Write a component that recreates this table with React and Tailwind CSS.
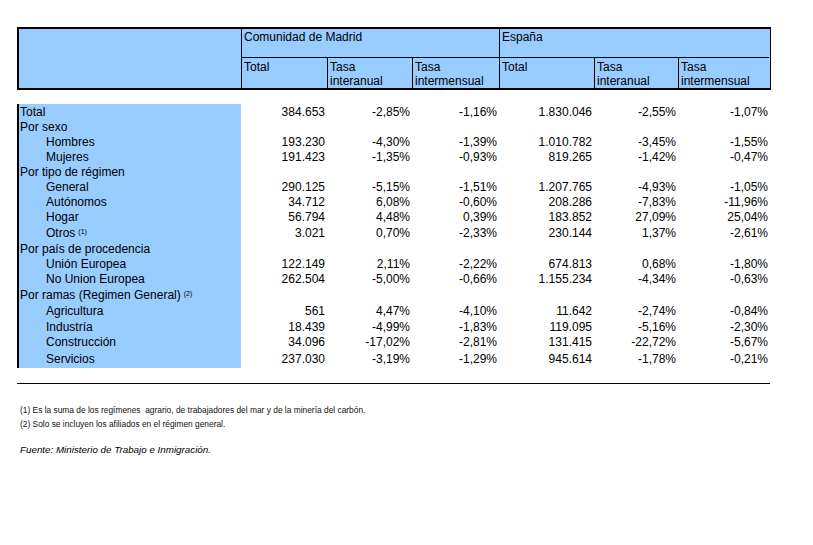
import React from 'react';

const rows = [
  { label: 'Total', v: ['384.653', '-2,85%', '-1,16%', '1.830.046', '-2,55%', '-1,07%'], h: 'h-[15px]' },
  { label: 'Por sexo', h: 'h-[15px]' },
  { label: 'Hombres', sub: true, v: ['193.230', '-4,30%', '-1,39%', '1.010.782', '-3,45%', '-1,55%'], h: 'h-[15px]' },
  { label: 'Mujeres', sub: true, v: ['191.423', '-1,35%', '-0,93%', '819.265', '-1,42%', '-0,47%'], h: 'h-[15px]' },
  { label: 'Por tipo de régimen', h: 'h-[15px]' },
  { label: 'General', sub: true, v: ['290.125', '-5,15%', '-1,51%', '1.207.765', '-4,93%', '-1,05%'], h: 'h-[15px]' },
  { label: 'Autónomos', sub: true, v: ['34.712', '6,08%', '-0,60%', '208.286', '-7,83%', '-11,96%'], h: 'h-[15px]' },
  { label: 'Hogar', sub: true, v: ['56.794', '4,48%', '0,39%', '183.852', '27,09%', '25,04%'], h: 'h-[15px]' },
  { label: 'Otros', note: '(1)', sub: true, v: ['3.021', '0,70%', '-2,33%', '230.144', '1,37%', '-2,61%'], h: 'h-[17px]' },
  { label: 'Por país de procedencia', h: 'h-[15px]' },
  { label: 'Unión Europea', sub: true, v: ['122.149', '2,11%', '-2,22%', '674.813', '0,68%', '-1,80%'], h: 'h-[15px]' },
  { label: 'No Union Europea', sub: true, v: ['262.504', '-5,00%', '-0,66%', '1.155.234', '-4,34%', '-0,63%'], h: 'h-[15px]' },
  { label: 'Por ramas (Regimen General)', note: '(2)', h: 'h-[17px]' },
  { label: 'Agricultura', sub: true, v: ['561', '4,47%', '-4,10%', '11.642', '-2,74%', '-0,84%'], h: 'h-[16px]' },
  { label: 'Industría', sub: true, v: ['18.439', '-4,99%', '-1,83%', '119.095', '-5,16%', '-2,30%'], h: 'h-[15px]' },
  { label: 'Construcción', sub: true, v: ['34.096', '-17,02%', '-2,81%', '131.415', '-22,72%', '-5,67%'], h: 'h-[15px]' },
  { label: 'Servicios', sub: true, v: ['237.030', '-3,19%', '-1,29%', '945.614', '-1,78%', '-0,21%'], h: 'h-[19px] pt-[1px]' },
];

const widths = ['w-[86px]', 'w-[85px]', 'w-[87px]', 'w-[95px]', 'w-[84px]', 'w-[92px]'];

function SubHead({ children, first }) {
  return (
    <div className={`h-[30px] pl-[2px] pt-[2px] leading-[14px] ${first ? '' : 'border-l border-black'}`}>
      {children}
    </div>
  );
}

function Group({ title, w }) {
  return (
    <div className="flex flex-col border-l border-black">
      <div className="h-[29px] border-b border-black pl-[2px] pt-[1px] leading-[14px]">{title}</div>
      <div className="flex">
        <div className={`${w[0]} shrink-0`}>
          <SubHead first>Total</SubHead>
        </div>
        <div className={`${w[1]} shrink-0`}>
          <SubHead>Tasa<br />interanual</SubHead>
        </div>
        <div className={`${w[2]} shrink-0`}>
          <SubHead>Tasa<br />intermensual</SubHead>
        </div>
      </div>
    </div>
  );
}

export default function App() {
  return (
    <div className="w-[813px] h-[545px] bg-white text-black pl-[17px] pt-[27px] font-['Liberation_Sans',Arial,sans-serif] text-[12px]">
      {/* cabecera */}
      <div className="flex w-[754px] bg-[#99ccff] border-t-2 border-b-2 border-l-2 border-r border-black">
        <div className="w-[222px] shrink-0" />
        <Group title="Comunidad de Madrid" w={['w-[85px]', 'w-[85px]', 'w-[87px]']} />
        <Group title="España" w={['w-[94px]', 'w-[84px]', 'w-[91px]']} />
      </div>

      {/* cuerpo */}
      <div className="mt-[14px] flex flex-col w-[753px]">
        {rows.map((r, i) => (
          <div key={i} className={`flex bg-white ${r.h.includes('pt-') ? 'h-[19px]' : r.h}`}>
            <div className="w-[224px] h-full shrink-0 bg-[#99ccff] border-l-2 border-black flex items-center whitespace-nowrap">
              <span className={`${r.sub ? 'pl-[27px]' : 'pl-[1px]'} ${r.h.includes('pt-') ? 'pt-[1px]' : ''}`}>
                {r.label}
                {r.note && <sup className="text-[7px] ml-[3px] relative -top-[3px]">{r.note}</sup>}
              </span>
            </div>
            {widths.map((w, j) => (
              <div key={j} className={`${w} shrink-0 flex items-center justify-end pr-[2px] whitespace-nowrap ${r.h.includes('pt-') ? 'pt-[1px]' : ''}`}>
                {r.v ? r.v[j] : ''}
              </div>
            ))}
          </div>
        ))}
      </div>

      <div className="mt-[15px] w-[753px] border-t border-black" />

      <div className="mt-[19px] pl-[3px] text-[8.4px] leading-[14px] text-[#111]">
        <div>(1) Es la suma de los regímenes&nbsp; agrario, de trabajadores del mar y de la minería del carbón.</div>
        <div>(2) Solo se incluyen los afiliados en el régimen general.</div>
      </div>
      <div className="mt-[12px] pl-[3px] text-[9.8px] italic">Fuente: Ministerio de Trabajo e Inmigración.</div>
    </div>
  );
}
